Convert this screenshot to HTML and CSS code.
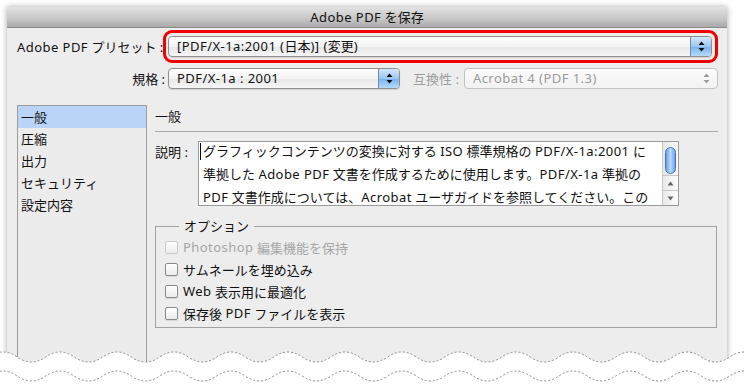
FILE: index.html
```html
<!doctype html>
<html>
<head>
<meta charset="utf-8">
<title>Adobe PDF を保存</title>
<link rel="stylesheet" href="styles.css">
</head>
<body>
<div class="window">
	<div class="titlebar"><span class="en">Adobe PDF</span> を保存</div>
	<div class="content">
		<div class="row row-preset">
			<span class="lbl lbl-preset"><span class="en">Adobe PDF</span> プリセット :</span>
			<div class="mark">
				<div class="popup popup-wide">
					<span class="val"><span class="en">[PDF/X-1a:2001 (</span>日本<span class="en">)] (</span>変更<span class="en">)</span></span>
					<span class="btn"><svg width="7" height="11" viewBox="0 0 7 11"><path d="M3.5 0.5 L6.5 4 L0.5 4 Z M0.5 7 L6.5 7 L3.5 10.5 Z" fill="#111"/></svg></span>
				</div>
			</div>
		</div>
		<div class="row row-std">
			<span class="lbl lbl-std">規格 :</span>
			<div class="popup popup-std">
				<span class="val"><span class="en">PDF/X-1a : 2001</span></span>
				<span class="btn"><svg width="7" height="11" viewBox="0 0 7 11"><path d="M3.5 0.5 L6.5 4 L0.5 4 Z M0.5 7 L6.5 7 L3.5 10.5 Z" fill="#111"/></svg></span>
			</div>
			<span class="lbl lbl-dim">互換性 :</span>
			<div class="popup popup-off">
				<span class="val"><span class="en">Acrobat 4 (PDF 1.3)</span></span>
				<span class="btn"><svg width="7" height="11" viewBox="0 0 7 11"><path d="M3.5 0.5 L6.5 4 L0.5 4 Z M0.5 7 L6.5 7 L3.5 10.5 Z" fill="#9a9a9a"/></svg></span>
			</div>
		</div>
		<div class="main">
			<ul class="side">
				<li class="on">一般</li>
				<li>圧縮</li>
				<li>出力</li>
				<li>セキュリティ</li>
				<li>設定内容</li>
			</ul>
			<div class="panel">
				<div class="panel-title">一般</div>
				<div class="desc">
					<span class="desc-lbl">説明 :</span>
					<div class="descbox">
						<div class="desctext"><span class="caret"></span>グラフィックコンテンツの変換に対する <span class="en">ISO</span> 標準規格の <span class="en">PDF/X-1a:2001</span> に<br>準拠した <span class="en">Adobe PDF</span> 文書を作成するために使用します。<span class="en">PDF/X-1a</span> 準拠の<br><span class="en">PDF</span> 文書作成については、<span class="en">Acrobat</span> ユーザガイドを参照してください。この</div>
						<div class="scroll">
							<div class="thumb"></div>
							<div class="arrows">
								<span><svg width="7" height="5" viewBox="0 0 7 5"><path d="M3.5 0.5 L6.5 4.5 L0.5 4.5 Z" fill="#666"/></svg></span>
								<span><svg width="7" height="5" viewBox="0 0 7 5"><path d="M0.5 0.5 L6.5 0.5 L3.5 4.5 Z" fill="#666"/></svg></span>
							</div>
						</div>
					</div>
				</div>
				<fieldset class="options">
					<legend>オプション</legend>
					<div class="check off"><span class="box"></span><span class="en">Photoshop</span>&nbsp;編集機能を保持</div>
					<div class="check"><span class="box"></span>サムネールを埋め込み</div>
					<div class="check"><span class="box"></span><span class="en">Web</span>&nbsp;表示用に最適化</div>
					<div class="check"><span class="box"></span>保存後&nbsp;<span class="en">PDF</span>&nbsp;ファイルを表示</div>
				</fieldset>
			</div>
		</div>
	</div>
</div>
<svg class="tear" width="744" height="60" viewBox="0 340 744 60">
	<path d="M-11.25 357 q14.25 -10 28.5 0 t28.5 0 t28.5 0 t28.5 0 t28.5 0 t28.5 0 t28.5 0 t28.5 0 t28.5 0 t28.5 0 t28.5 0 t28.5 0 t28.5 0 t28.5 0 t28.5 0 t28.5 0 t28.5 0 t28.5 0 t28.5 0 t28.5 0 t28.5 0 t28.5 0 t28.5 0 t28.5 0 t28.5 0 t28.5 0 t28.5 0 L760 400 L-20 400 Z" fill="#fff"/>
	<path d="M-11.25 357 q14.25 -10 28.5 0 t28.5 0 t28.5 0 t28.5 0 t28.5 0 t28.5 0 t28.5 0 t28.5 0 t28.5 0 t28.5 0 t28.5 0 t28.5 0 t28.5 0 t28.5 0 t28.5 0 t28.5 0 t28.5 0 t28.5 0 t28.5 0 t28.5 0 t28.5 0 t28.5 0 t28.5 0 t28.5 0 t28.5 0 t28.5 0 t28.5 0" fill="none" stroke="#8a8a8a" stroke-dasharray="2 2"/>
	<path d="M-11.25 376 q14.25 -10 28.5 0 t28.5 0 t28.5 0 t28.5 0 t28.5 0 t28.5 0 t28.5 0 t28.5 0 t28.5 0 t28.5 0 t28.5 0 t28.5 0 t28.5 0 t28.5 0 t28.5 0 t28.5 0 t28.5 0 t28.5 0 t28.5 0 t28.5 0 t28.5 0 t28.5 0 t28.5 0 t28.5 0 t28.5 0 t28.5 0 t28.5 0" fill="none" stroke="#8a8a8a" stroke-dasharray="2 2"/>
</svg>
</body>
</html>
```
FILE: styles.css
```css
*{margin:0; padding:0; list-style:none; box-sizing:border-box;}
html,body{background:#fff; overflow:hidden;}
body{width:744px; height:392px; position:relative; font-family:"Noto Sans","Noto Sans CJK JP",sans-serif; font-size:13px; color:#111;}
.en{letter-spacing:0.45px;}

.window{width:720px; height:380px; margin:7px 0 0 7px; background:#ededed; box-shadow:0 0 6px rgba(0,0,0,0.35);}
.titlebar{height:21px; line-height:21px; text-align:center; background:linear-gradient(#e2e2e2,#c6c6c6 60%,#aaaaaa); border-bottom:1px solid #8c8c8c;}

.content{padding:2px 9px 0 10px;}
.row{display:flex; align-items:center;}
.lbl{flex:none; text-align:right; white-space:nowrap;}
.lbl-preset{width:146px; padding-right:3px;}
.lbl-std{width:151px; padding-right:3px;}
.lbl-dim{color:#9c9c9c; margin-left:13px; margin-right:5px;}

.mark{flex:1; border:3px solid #ee0000; border-radius:9px; padding:3px 3px 3px 2px;}

.popup{display:flex; height:21px; border:1px solid #8f8f8f; border-radius:4px; background:linear-gradient(#fefefe,#f3f3f3 50%,#e6e6e6 52%,#f6f6f6); box-shadow:0 1px 1px rgba(0,0,0,0.12); overflow:hidden;}
.popup .val{flex:1; padding-left:8px; line-height:19px; white-space:nowrap;}
.popup .btn{width:21px; flex:none; display:flex; align-items:center; justify-content:center; border-left:1px solid #6f88a8; background:linear-gradient(#d3e6fa,#9cc6f1 50%,#79b1ee 52%,#b6daf9);}
.row-std{margin-top:5px;}
.popup-std{width:232px;}
.popup-off{flex:1; border-color:#c2c2c2; box-shadow:none; background:linear-gradient(#fbfbfb,#f2f2f2);}
.popup-off .val{color:#9a9a9a;}
.popup-off .btn{border-left:none; background:none;}

.main{display:flex; height:264px; margin-top:16px;}
.side{width:130px; flex:none; border:1px solid #9c9c9c; border-bottom:none; background:#ececec;}
.side li{height:22px; line-height:22px; padding-left:3px;}
.side li.on{background:#b9d4f7;}

.panel{flex:1; padding-left:8px;}
.panel-title{line-height:22px; padding-bottom:4px; border-bottom:1px solid #a9a9a9;}

.desc{display:flex; margin-top:9px;}
.desc-lbl{width:43px; flex:none; line-height:22px;}
.descbox{width:481px; height:65px; display:flex; border:1px solid #9a9a9a; background:#fff;}
.desctext{flex:1; padding-left:4px; line-height:23px; margin-top:-2px; white-space:nowrap; overflow:hidden;}
.caret{display:inline-block; width:1px; height:17px; background:#000; vertical-align:-4px; margin:0 2px 0 -3px;}
.scroll{width:16px; flex:none; display:flex; flex-direction:column; border-left:1px solid #c9c9c9; background:linear-gradient(90deg,#e6e6e6,#fafafa);}
.thumb{height:27px; margin:5px 2px 0 2px; border:1px solid #3f74c2; border-radius:7px; background:linear-gradient(90deg,#6a9ee6,#b9dafc 50%,#6fa3e8);}
.arrows{margin-top:auto; display:flex; flex-direction:column;}
.arrows span{height:15px; display:flex; align-items:center; justify-content:center; border-top:1px solid #c8c8c8; background:linear-gradient(90deg,#e9e9e9,#fdfdfd);}

.options{margin-top:10px; margin-right:1px; border:1px solid #a2a2a2; padding:0 0 3px 9px;}
.options legend{margin-left:14px; padding:0 5px; line-height:20px;}
.check{display:flex; align-items:center; height:22px; white-space:nowrap;}
.check .box{width:13px; height:13px; flex:none; margin-right:5px; border:1px solid #8a8a8a; border-radius:2px; background:linear-gradient(#fff,#ececec); box-shadow:0 1px 1px rgba(0,0,0,0.1);}
.check.off{color:#a6a6a6;}
.check.off .box{border-color:#cacaca; box-shadow:none;}

.tear{position:absolute; left:0; top:340px;}
```
